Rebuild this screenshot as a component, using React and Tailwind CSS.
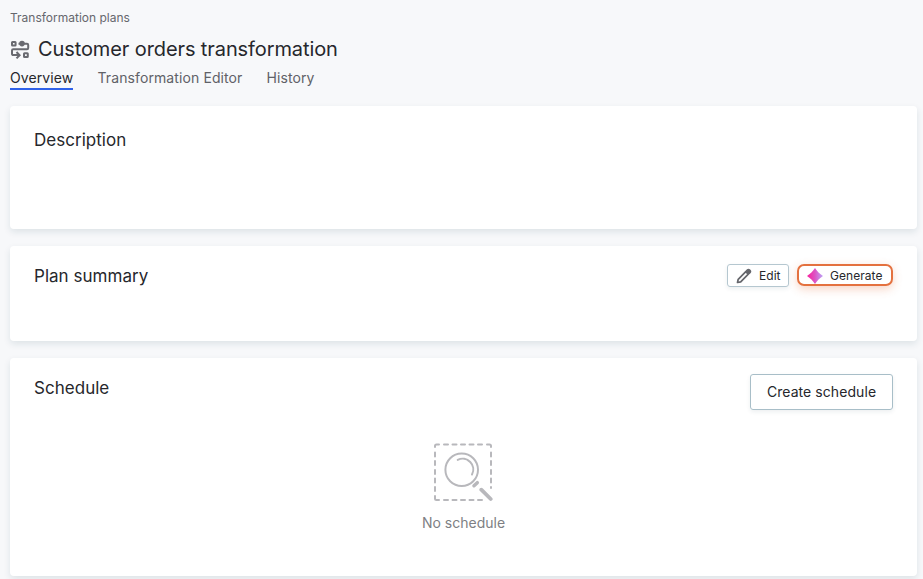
function PlanIcon() {
  return (
    <svg className="mt-px h-5 w-5 shrink-0" viewBox="0 0 20 20" fill="none" stroke="#696a70" strokeWidth="2">
      <rect x="2" y="2" width="3.600" height="3.600" rx="0.500" />
      <circle cx="12" cy="3.600" r="2.800" fill="#696a70" stroke="none" />
      <path d="M8.500 3.700H17a1.200 1.200 0 0 1 1.200 1.200v3.200a1.200 1.200 0 0 1-1.200 1.200H3.200A1.200 1.200 0 0 0 2 10.500v3.400a1.200 1.200 0 0 0 1.200 1.200h6" />
      <path d="M6.500 12 9.600 15.200 6.500 18.400" />
      <rect x="14" y="13.300" width="3.800" height="3.800" rx="0.500" />
    </svg>
  );
}

function PencilIcon() {
  return (
    <svg className="h-4 w-4 shrink-0" viewBox="0 0 16 16" fill="none" stroke="#65666c" strokeWidth="1.700" strokeLinejoin="round">
      <path d="M1.500 14.500 2.200 11.300 9.800 3.700l2.500 2.500L4.700 13.800z" />
      <path d="m10.600 2.900 1-1a1.200 1.200 0 0 1 1.700 0l.8.8a1.200 1.200 0 0 1 0 1.700l-1 1z" fill="#65666c" />
    </svg>
  );
}

function SparkIcon() {
  return (
    <svg className="h-4 w-4 shrink-0" viewBox="0 0 16 16">
      <defs>
        <linearGradient id="spark" x1="0" x2="1" y1="0" y2="0">
          <stop offset="0.1" stopColor="#f42aa4" />
          <stop offset="0.5" stopColor="#dc55c4" />
          <stop offset="1" stopColor="#bda4f8" />
        </linearGradient>
      </defs>
      <path d="M8 0C10 3.200 12.800 6 16 8c-3.200 2-6 4.800-8 8C6 12.800 3.200 10 0 8 3.200 6 6 3.200 8 0z" fill="url(#spark)" />
    </svg>
  );
}

function EmptyIcon() {
  return (
    <svg className="mr-[2px] h-[60px] w-[60px]" viewBox="0 0 60 60" fill="none" stroke="#b8b8bc" strokeWidth="2" strokeLinecap="round">
      <path d="M2 5V4A1.500 1.500 0 0 1 3.500 2.500H6M54 2.500h2.500A1.500 1.500 0 0 1 58 4V5M2 54v2.500A1.500 1.500 0 0 0 3.500 58H6" />
      <path d="M11 2.500h4M19.500 2.500h4M28 2.500h4M36.500 2.500h4M45 2.500h4M11 58h4M19.500 58h4M28 58h4M36.500 58h4M45 58h4" />
      <path d="M2 10.500v4M2 19v4M2 28v4M2 36.500v4M2 45v4M58 10.500v4M58 19v4M58 28v4M58 36.500v4M58 45v1" />
      <circle cx="28.700" cy="27.700" r="16.300" />
      <path d="M24.700 17.900A10.700 10.700 0 0 1 39 32.500" />
      <path d="m41 43.700 3.300-3" strokeWidth="3.500" />
      <path d="m48.300 47.700 9.400 9.300" strokeWidth="3.800" />
    </svg>
  );
}

const card = "rounded-[4px] bg-white px-6 shadow-[0_3px_7px_rgba(20,60,80,0.11)]";
const heading = "text-[17px] leading-6 tracking-[0.03px] text-[#26272c]";

export default function App() {
  return (
    <div className="h-[579px] w-[923px] overflow-hidden bg-[#f7f8fa] pr-[6px] pl-[10px] font-['Inter',sans-serif] text-[#26272c]">
      <header className="h-[106px] pt-[9px]">
        <div className="text-[12px] leading-[18px] text-[#66676d]">Transformation plans</div>
        <div className="mt-[8px] flex h-7 items-center gap-2">
          <PlanIcon />
          <h1 className="text-[20px] leading-7 tracking-[-0.1px]">Customer orders transformation</h1>
        </div>
        <nav className="mt-[5px] flex gap-[24.500px] text-[14px] leading-5 tracking-[0.1px] text-[#606167]">
          <a className="h-[22px] w-[63px] border-b-2 border-[#2f62e9] text-[#26272c]">Overview</a>
          <a className="w-[144.500px] whitespace-nowrap">Transformation Editor</a>
          <a>History</a>
        </nav>
      </header>
      <main className="flex flex-col gap-[17px]">
        <section className={`${card} h-[123px] pt-[22px]`}>
          <h2 className={heading}>Description</h2>
        </section>
        <section className={`${card} flex h-[95px] items-start justify-between pt-[18px]`}>
          <h2 className={heading}>Plan summary</h2>
          <div className="flex gap-2 text-[12px] tracking-[0.05px]">
            <button className="flex h-[23px] w-[62px] items-center gap-[7px] rounded-[3px] border border-[#b5c7d0] pl-[8px] shadow-[0_2px_4px_rgba(20,60,80,0.08)]">
              <PencilIcon />Edit
            </button>
            <button className="flex h-[22px] w-[96px] items-center gap-[7px] rounded-[7px] border-2 border-[#e4713f] pt-px pl-[8px] shadow-[0_3px_10px_rgba(228,113,63,0.3)]">
              <SparkIcon />Generate
            </button>
          </div>
        </section>
        <section className={`${card} h-[218px] pt-[16px]`}>
          <div className="flex h-[36px] items-start justify-between">
            <h2 className={`${heading} mt-[2px]`}>Schedule</h2>
            <button className="h-[36px] w-[143px] rounded-[3px] border border-[#a8bec8] pb-px text-[14px] tracking-[0.07px] shadow-[0_2px_4px_rgba(20,60,80,0.08)]">Create schedule</button>
          </div>
          <div className="mt-[32px] flex flex-col items-center gap-[11px]">
            <EmptyIcon />
            <p className="text-[14px] leading-5 text-[#7e7f84]">No schedule</p>
          </div>
        </section>
      </main>
    </div>
  );
}
